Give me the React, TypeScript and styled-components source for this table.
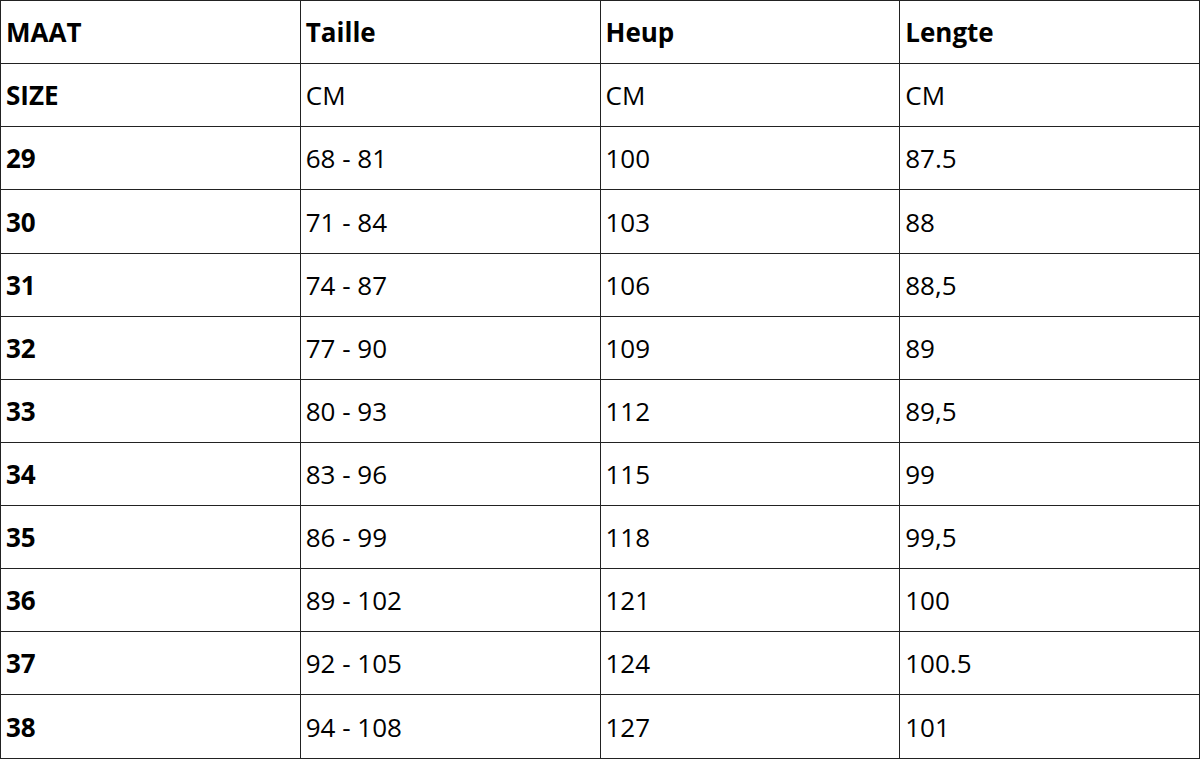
import React from "react";
import styled, { createGlobalStyle } from "styled-components";

const Global = createGlobalStyle`
  html, body { margin: 0; padding: 0; background: #fff; }
  body { font-family: "Open Sans", "Liberation Sans", sans-serif; color: #000; }
`;

const Table = styled.table`
  width: 1200px;
  height: 758.5px;
  border-collapse: collapse;
  table-layout: fixed;
`;

const Row = styled.tr``;

const Cell = styled.td<{ $bold?: boolean }>`
  border: 1px solid #222;
  padding: 2px 5px 0;
  font-size: 26px;
  line-height: 1.3;
  font-weight: ${(p) => (p.$bold ? 700 : 400)};
  vertical-align: middle;
  text-align: left;
  white-space: nowrap;
`;

const rows: string[][] = [
  ["29", "68 - 81", "100", "87.5"],
  ["30", "71 - 84", "103", "88"],
  ["31", "74 - 87", "106", "88,5"],
  ["32", "77 - 90", "109", "89"],
  ["33", "80 - 93", "112", "89,5"],
  ["34", "83 - 96", "115", "99"],
  ["35", "86 - 99", "118", "99,5"],
  ["36", "89 - 102", "121", "100"],
  ["37", "92 - 105", "124", "100.5"],
  ["38", "94 - 108", "127", "101"],
];

export default function App() {
  return (
    <>
      <Global />
      <Table>
        <tbody>
          <Row>
            <Cell $bold>MAAT</Cell>
            <Cell $bold>Taille</Cell>
            <Cell $bold>Heup</Cell>
            <Cell $bold>Lengte</Cell>
          </Row>
          <Row>
            <Cell $bold>SIZE</Cell>
            <Cell>CM</Cell>
            <Cell>CM</Cell>
            <Cell>CM</Cell>
          </Row>
          {rows.map((r) => (
            <Row key={r[0]}>
              <Cell $bold>{r[0]}</Cell>
              <Cell>{r[1]}</Cell>
              <Cell>{r[2]}</Cell>
              <Cell>{r[3]}</Cell>
            </Row>
          ))}
        </tbody>
      </Table>
    </>
  );
}
